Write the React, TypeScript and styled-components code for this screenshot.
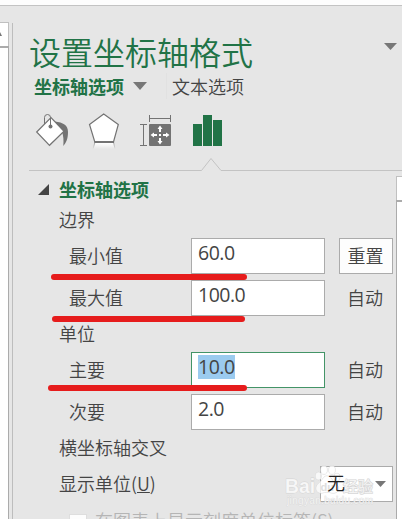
import React from "react";
import styled, { createGlobalStyle } from "styled-components";

const GREEN = "#217346";

const GlobalStyle = createGlobalStyle`
  * { box-sizing: border-box; }
  html, body { margin: 0; height: 100%; overflow: hidden; }
  #root { height: 519px; overflow: hidden; }
  body {
    background: #e6e6e6;
    color: #444;
    font-family: "Noto Sans CJK SC", sans-serif;
    font-size: 18px;
    font-weight: 350;
  }
`;

const Window = styled.div`
  display: flex;
  flex-direction: column;
  width: 402px;
  height: 519px;
  overflow: hidden;
`;

const TopStrip = styled.div`
  flex: none;
  height: 6px;
  background: #fdfdfd;
  border-bottom: 1px solid #c3c3c3;
`;

const Body = styled.div`
  display: flex;
  flex: 1;
  min-height: 0;
`;

const Sheet = styled.div`
  flex: none;
  width: 9px;
  margin: 16px 3px 0 0;
  display: flex;
  flex-direction: column;
`;

const SheetTop = styled.div`
  display: flex;
  align-items: center;
  height: 24px;
  background: #fff;
  border-top: 1px solid #c0c0c0;
  border-right: 1px solid #c0c0c0;
`;

const SheetBody = styled.div`
  flex: 1;
  background: #fff;
  border-top: 2px solid #ababab;
  border-right: 1px solid #ababab;
`;

const Pane = styled.div`
  flex: 1;
  min-width: 0;
  margin-top: 17px;
  border-left: 1px solid #bdbdbd;
  display: flex;
  flex-direction: column;
`;

const Header = styled.header`
  display: flex;
  align-items: center;
  justify-content: space-between;
  flex: none;
  height: 50px;
  padding: 6px 5px 0 16px;
`;

const Title = styled.h1`
  margin: 0;
  color: ${GREEN};
  font-size: 32px;
  line-height: 42px;
  font-weight: 350;
  white-space: nowrap;
`;

const TitleCaret = styled.svg`
  display: block;
  margin-top: -10px;
`;

const Tabs = styled.nav`
  display: flex;
  align-items: center;
  flex: none;
  height: 26px;
  padding-left: 21px;
  line-height: 26px;
  white-space: nowrap;
`;

const ActiveTab = styled.span`
  width: 99px;
  color: ${GREEN};
  font-weight: 700;
`;

const OtherTab = styled.span`
  margin-left: 19px;
  border-left: 1px solid #e1e1e1;
  padding-left: 5px;
`;

const IconBar = styled.div`
  display: flex;
  flex: none;
  height: 45px;
  padding: 11px 0 0 22px;
  gap: 16px;
`;

const Glyph = styled.svg`
  display: block;
  flex: none;
  overflow: visible;
`;

const Divider = styled.svg`
  display: block;
  flex: none;
  margin: 0 0 0 16px;
`;

const Content = styled.div`
  display: flex;
  flex: 1;
  min-height: 0;
`;

const Form = styled.div`
  flex: none;
  width: 383px;
  padding: 1px 3px 0 45px;
`;

const SectionTitle = styled.div`
  display: flex;
  align-items: center;
  height: 30px;
  margin-left: -20px;
  gap: 10px;
  padding-top: 4px;
  color: ${GREEN};
  font-weight: 700;
  line-height: 26px;
`;

const Row = styled.div<{ $indent?: boolean; $gap?: boolean }>`
  position: relative;
  display: flex;
  align-items: center;
  height: 36px;
  margin-top: ${(p) => (p.$gap ? 6 : 0)}px;
  padding-left: ${(p) => (p.$indent ? 11 : 1)}px;
  line-height: 26px;
  white-space: nowrap;
`;

const Label = styled.span`
  width: 122px;
  padding-bottom: 2px;
`;

const Heading = styled.span`
  padding-bottom: 2px;
`;

const Field = styled.div<{ $active?: boolean }>`
  width: 134px;
  height: 36px;
  padding: 2px 0 0 6px;
  border: 1px solid ${(p) => (p.$active ? "#439467" : "#ababab")};
  background: #fff;
  font-family: "Open Sans", sans-serif;
  font-size: 19.5px;
  font-weight: 400;
  letter-spacing: -0.5px;
  line-height: 24px;
`;

const Selected = styled.span`
  display: inline-block;
  height: 24px;
  width: 37px;
  background: #9bcbef;
`;

const ResetButton = styled.button`
  width: 54px;
  height: 36px;
  margin: 0 0 0 14px;
  padding: 0 1px 3px 0;
  border: 1px solid #ababab;
  background: #fdfdfd;
  color: inherit;
  font: inherit;
  line-height: 26px;
`;

const Auto = styled.span`
  margin-left: 22px;
  padding-bottom: 2px;
`;

const Mark = styled.i<{ $left: number; $width: number; $top: number }>`
  position: absolute;
  z-index: 1;
  left: ${(p) => p.$left}px;
  top: ${(p) => p.$top}px;
  width: ${(p) => p.$width}px;
  height: 6px;
  border-radius: 3px;
  background: #e61c1c;
`;

const Select = styled.div`
  display: flex;
  align-items: center;
  justify-content: space-between;
  width: 73px;
  height: 36px;
  margin-left: auto;
  padding: 0 6px;
  border: 1px solid #ababab;
  background: #fff;
  color: #222;
`;

const SelectValue = styled.span`
  position: relative;
  z-index: 3;
  margin-top: -5px;
`;

const DisabledRow = styled(Row)`
  color: #b5b5b5;
  gap: 8px;
`;

const Checkbox = styled.span`
  width: 18px;
  height: 18px;
  margin-top: 6px;
  border: 1px solid #dedede;
  background: #fdfdfd;
`;

const Watermark = styled.svg`
  position: absolute;
  z-index: 2;
  left: 226px;
  top: -3px;
  pointer-events: none;
`;

const ScrollColumn = styled.div`
  flex: 1;
  margin-top: 5px;
  display: flex;
  flex-direction: column;
`;

const ScrollTop = styled.div`
  height: 24px;
  background: #fff;
  border-top: 1px solid #c0c0c0;
  border-left: 1px solid #c0c0c0;
`;

const ScrollTrack = styled.div`
  flex: 1;
  background: #fff;
  border-top: 2px solid #ababab;
  border-left: 1px solid #ababab;
`;

const FillIcon = () => (
  <Glyph width="38" height="40" viewBox="35 110 38 40">
    <path d="M55 121.500C63 122.500 68 125 68 132C68 139 66 143 63.300 146C63.800 140 63.500 136 62 132Z" fill="#737373" />
    <path d="M36.7 132L51 117.7L64 131.3L49.5 145.3Z" fill="#fff" stroke="#737373" strokeWidth="1.2" />
    <path d="M44.5 124V117.5Q44.5 114.5 47.5 114.5Q50.5 114.5 50.5 117.5V126" fill="none" stroke="#737373" />
    <circle cx="50.5" cy="126.5" r="2" fill="#737373" />
  </Glyph>
);

const EffectsIcon = () => (
  <Glyph width="34" height="40" viewBox="89 110 34 40">
    <defs>
      <linearGradient id="reflect" x1="0" y1="0" x2="0" y2="1">
        <stop offset="0" stopColor="#fff" />
        <stop offset="1" stopColor="#e6e6e6" />
      </linearGradient>
      <linearGradient id="reflectEdge" x1="0" y1="142" x2="0" y2="149" gradientUnits="userSpaceOnUse">
        <stop offset="0" stopColor="#999" />
        <stop offset="1" stopColor="#e6e6e6" />
      </linearGradient>
    </defs>
    <path d="M95 143H114L115 149H93Z" fill="url(#reflect)" />
    <path d="M95 142L93 149M113.5 142L115 149" stroke="url(#reflectEdge)" />
    <path d="M103.7 114L118.3 124.5L113.5 142H94.8L89.5 124.5Z" fill="#fff" stroke="#737373" strokeWidth="1.2" />
    <path d="M94.5 142H114" stroke="#737373" strokeWidth="2" />
  </Glyph>
);

const SizeIcon = () => (
  <Glyph width="33" height="40" viewBox="139 110 33 40">
    <rect x="149" y="124" width="22" height="22" rx="1" fill="#737373" />
    <path
      d="M149.5 115V122M170.5 115V122M149.5 118.5H170.5M140 124.5H147M140 145.5H147M143.5 124.5V145.5"
      fill="none"
      stroke="#737373"
    />
    <path
      d="M160 125.5L162.5 129H161V132H159V129H157.5ZM160 144.5L162.5 141H161V138H159V141H157.5ZM150.5 135L154 132.5V134H157V136H154V137.5ZM169.5 135L166 132.5V134H163V136H166V137.5Z"
      fill="#fff"
    />
    <rect x="159" y="134" width="2" height="2" fill="#fff" />
  </Glyph>
);

const ChartIcon = () => (
  <Glyph width="31" height="40" viewBox="188 110 31 40">
    <path d="M193 124H202V146H193ZM203 115H212V146H203ZM213 120H222V146H213Z" fill={GREEN} />
  </Glyph>
);

const Logo = () => (
  <Watermark width="95" height="46" viewBox="284 463 95 46">
    <g fill="#fff" stroke="#d4d4d4" strokeWidth="0.8" fillOpacity="0.72" paintOrder="stroke">
      <ellipse cx="318.5" cy="476" rx="3" ry="3.8" />
      <ellipse cx="324" cy="470" rx="3.2" ry="4.2" />
      <ellipse cx="332" cy="470" rx="3.2" ry="4.2" />
      <ellipse cx="337" cy="477" rx="3" ry="3.8" />
      <path d="M327 476C331 476 332 481 336 484C341 488 338 494 332 493C328 492 325 492 322 493C316 494 314 487 319 483C323 480 323 476 327 476Z" />
      <text x="285" y="493" fontFamily="Liberation Sans, sans-serif" fontWeight="700" fontSize="21" textLength="30" lengthAdjust="spacingAndGlyphs">Bai</text>
      <text x="343" y="491.500" fontFamily="Noto Sans CJK SC, sans-serif" fontWeight="500" fontSize="15" strokeWidth="1.2">经验</text>
      <text x="287" y="503.500" fontFamily="Liberation Sans, sans-serif" fontSize="10" strokeWidth="0.6" textLength="86">jingyan.baidu.com</text>
    </g>
    <text x="320.500" y="491" fontFamily="Liberation Sans, sans-serif" fontWeight="700" fontSize="11" fill="#dedede">du</text>
  </Watermark>
);

const PaneContent = () => (
  <Content>
    <Form>
      <SectionTitle>
        <svg width="11" height="11" viewBox="0 0 11 11">
          <path d="M11 0V11H0Z" fill="#444" />
        </svg>
        坐标轴选项
      </SectionTitle>
      <Row>
        <Heading>边界</Heading>
      </Row>
      <Row $indent>
        <Label>最小值</Label>
        <Field>60.0</Field>
        <ResetButton>重置</ResetButton>
        <Mark $left={-7} $width={196} $top={36} />
      </Row>
      <Row $indent $gap>
        <Label>最大值</Label>
        <Field>100.0</Field>
        <Auto>自动</Auto>
        <Mark $left={-6} $width={193} $top={36} />
      </Row>
      <Row>
        <Heading>单位</Heading>
      </Row>
      <Row $indent>
        <Label>主要</Label>
        <Field $active>
          <Selected>10.0</Selected>
        </Field>
        <Auto>自动</Auto>
        <Mark $left={-10} $width={199} $top={33} />
      </Row>
      <Row $indent $gap>
        <Label>次要</Label>
        <Field>2.0</Field>
        <Auto>自动</Auto>
      </Row>
      <Row>
        <Heading>横坐标轴交叉</Heading>
      </Row>
      <Row>
        <Heading>
          显示单位(<u>U</u>)
        </Heading>
        <Select>
          <SelectValue>无</SelectValue>
          <svg width="11" height="6" viewBox="0 0 11 6">
            <path d="M0 0H11L5.500 6Z" fill="#777" />
          </svg>
        </Select>
        <Logo />
      </Row>
      <DisabledRow $indent>
        <Checkbox />
        <span>在图表上显示刻度单位标签(S)</span>
      </DisabledRow>
    </Form>
    <ScrollColumn>
      <ScrollTop />
      <ScrollTrack />
    </ScrollColumn>
  </Content>
);

export default function App() {
  return (
    <Window>
      <GlobalStyle />
      <TopStrip />
      <Body>
        <Sheet>
          <SheetTop>
            <svg width="3" height="6" viewBox="0 0 3 6">
              <path d="M0 0L2 4H0Z" fill="#777" />
            </svg>
          </SheetTop>
          <SheetBody />
        </Sheet>
        <Pane>
          <Header>
            <Title>设置坐标轴格式</Title>
            <TitleCaret width="13" height="7" viewBox="0 0 13 7">
              <path d="M0 0H13L6.500 7Z" fill="#777" />
            </TitleCaret>
          </Header>
          <Tabs>
            <ActiveTab>坐标轴选项</ActiveTab>
            <svg width="14" height="8" viewBox="0 0 14 8">
              <path d="M0 0H14L7 8Z" fill="#777" />
            </svg>
            <OtherTab>文本选项</OtherTab>
          </Tabs>
          <IconBar>
            <FillIcon />
            <EffectsIcon />
            <SizeIcon />
            <ChartIcon />
          </IconBar>
          <Divider width="373" height="27" viewBox="29 144 373 27">
            <path d="M29 170.5H201.500L211 158.500L221 170.5H402" fill="none" stroke="#c3c3c3" />
          </Divider>
          <PaneContent />
        </Pane>
      </Body>
    </Window>
  );
}
